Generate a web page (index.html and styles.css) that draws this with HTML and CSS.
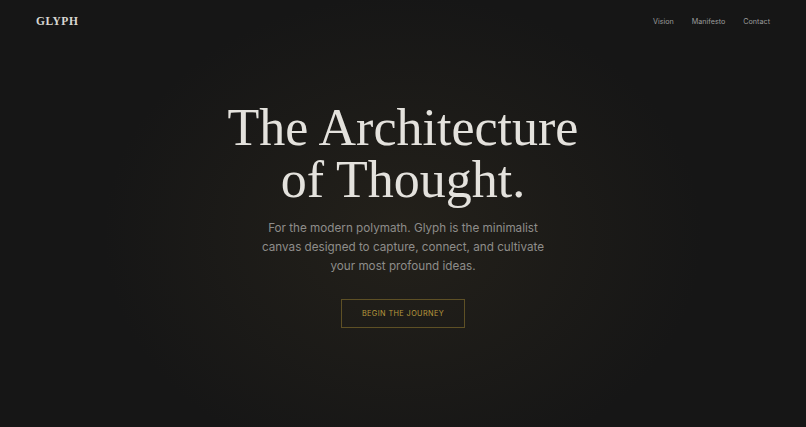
FILE: index.html
```html
<!DOCTYPE html>
<html lang="en">
<head>
<meta charset="utf-8">
<title>Glyph</title>
<link rel="stylesheet" href="styles.css">
</head>
<body>
<div class="page">
  <header class="nav">
    <div class="logo">GLYPH</div>
    <nav class="links">
      <a href="#">Vision</a>
      <a href="#">Manifesto</a>
      <a href="#">Contact</a>
    </nav>
  </header>
  <main class="hero">
    <h1 class="title">The Architecture<br>of Thought.</h1>
    <p class="lead">For the modern polymath. Glyph is the minimalist<br>canvas designed to capture, connect, and cultivate<br>your most profound ideas.</p>
    <a class="cta" href="#">BEGIN THE JOURNEY</a>
  </main>
</div>
</body>
</html>
```
FILE: styles.css
```css
html, body {
  margin: 0;
  padding: 0;
  height: 100%;
}
body {
  background: #161616;
  font-family: "Inter", "Liberation Sans", sans-serif;
  color: #e6e3dd;
  overflow: hidden;
}
.page {
  height: 427px;
  display: flex;
  flex-direction: column;
  background: radial-gradient(ellipse 300px 240px at 50% 55%, rgba(60, 52, 34, 0.35), rgba(22, 22, 22, 0) 100%);
}
.nav {
  display: flex;
  justify-content: space-between;
  align-items: center;
  padding: 13px 36px 0 36px;
  height: 16px;
}
.logo {
  font-family: "Liberation Serif", serif;
  font-weight: bold;
  font-size: 11.5px;
  letter-spacing: 0.5px;
  color: #d8d6d2;
}
.links {
  display: flex;
  gap: 18px;
}
.links a {
  font-size: 7.2px;
  color: #9c9c9c;
  text-decoration: none;
}
.hero {
  display: flex;
  flex-direction: column;
  align-items: center;
  text-align: center;
  padding-top: 73px;
}
.title {
  margin: 0;
  font-family: "Liberation Serif", serif;
  font-weight: normal;
  font-size: 52px;
  line-height: 52px;
  color: #e4e2dd;
}
.lead {
  margin: 13px 0 0 0;
  font-size: 11.7px;
  line-height: 19px;
  color: #8e8d8a;
}
.cta {
  margin-top: 23px;
  display: inline-block;
  padding: 10px 20px;
  border: 1px solid #5e5025;
  color: #b89a3e;
  font-size: 7.3px;
  letter-spacing: 0.4px;
  text-decoration: none;
  line-height: 7px;
}
```
